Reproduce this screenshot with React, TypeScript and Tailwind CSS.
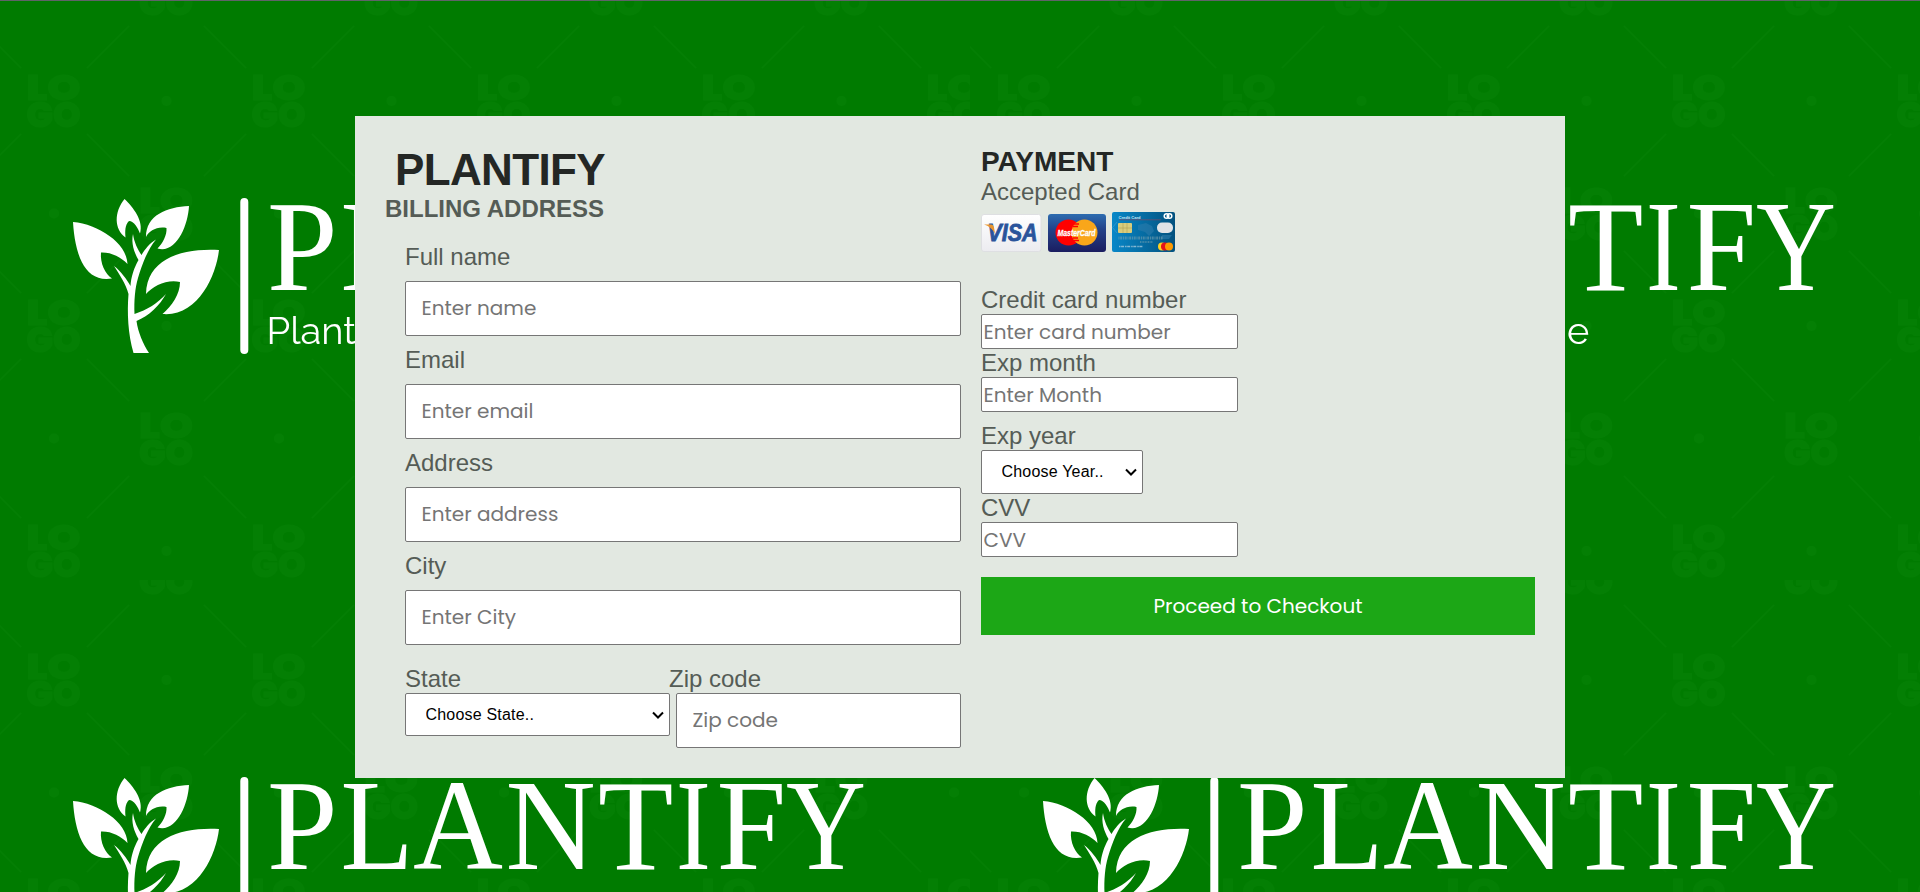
import React from 'react';

type FieldProps = { label: string; placeholder: string };

const sans = "font-['Liberation_Sans',Arial,sans-serif]";

const boxed =
  "box-border rounded-[2px] border border-[#767676] bg-white font-['Poppins','Inter',sans-serif] text-[20px] text-black placeholder:text-[#757575] outline-none";

function WideField({ label, placeholder }: FieldProps) {
  return (
    <label className="flex flex-col">
      <span className="leading-[27px]">{label}</span>
      <input placeholder={placeholder} className={`mt-[11px] h-[55px] w-full px-[15.5px] pb-[2px] ${boxed}`} />
    </label>
  );
}

function SmallField({ label, placeholder }: FieldProps) {
  return (
    <label className="flex flex-col">
      <span className="leading-[28px]">{label}</span>
      <input placeholder={placeholder} className={`h-[35px] w-[257px] px-[1.5px] ${boxed}`} />
    </label>
  );
}

function Picker({ option, size }: { option: string; size: string }) {
  return (
    <span className={`grid ${size}`}>
      <select className="col-start-1 row-start-1 h-full w-full appearance-none rounded-[2px] border border-[#767676] bg-white pl-[19.5px] text-[16px] tracking-[0.2px] text-black">
        <option>{option}</option>
      </select>
      <svg
        className="pointer-events-none col-start-1 row-start-1 mr-[6px] h-2 w-3 self-center justify-self-end"
        viewBox="0 0 12 8"
        fill="none"
        stroke="#000"
        strokeWidth="2"
      >
        <path d="M1 1.500L6 6.500L11 1.500" />
      </svg>
    </span>
  );
}

const glyphs = [
  { c: 'P', x: 267, w: 70.6 },
  { c: 'L', x: 340.6, w: 73 },
  { c: 'A', x: 413, w: 90 },
  { c: 'N', x: 505.5, w: 90.3 },
  { c: 'T', x: 598, w: 75.3 },
  { c: 'I', x: 676, w: 34.8 },
  { c: 'F', x: 716.5, w: 69.7 },
  { c: 'Y', x: 786, w: 80 },
];

function Mark({ x, y }: { x: number; y: number }) {
  return (
    <g strokeWidth="1" fontFamily="Poppins, sans-serif" fontWeight="800" fontSize="35">
      <text x={x - 27.5} y={y - 1} textLength="54" lengthAdjust="spacingAndGlyphs">
        LO
      </text>
      <text x={x - 27.5} y={y + 26} textLength="54" lengthAdjust="spacingAndGlyphs">
        GO
      </text>
    </g>
  );
}

function Backdrop() {
  return (
    <svg className="absolute inset-0 h-full w-full" aria-hidden="true">
      <defs>
        <pattern id="watermark" width="225" height="225" patternUnits="userSpaceOnUse">
          <g stroke="#047f04" fill="#047f04">
            <Mark x={54} y={101} />
            <Mark x={166.5} y={213.5} />
            <Mark x={166.5} y={-11.5} />
            <path
              strokeWidth="1.500"
              d="M87 68l42 -42M87 134l42 42M21 68L-21 26M21 134l-42 42M204 26l42 42M204 176l42 -42"
            />
            <circle cx="166.500" cy="101" r="5" stroke="none" />
            <circle cx="54" cy="213.500" r="5" stroke="none" />
          </g>
        </pattern>
        <pattern id="tile" width="970" height="579" y="1" patternUnits="userSpaceOnUse">
          <rect width="970" height="579" fill="#007b00" />
          <g transform="translate(0 -1)">
            <rect y="1" width="970" height="579" fill="url(#watermark)" />
            <g fill="#fff">
              <path d="M73 222C98 224 127 243 127.500 264C121 257 111 252 101 252.500C100 263 105 274 112 278.500C85 283 75 255 73 222Z" />
              <path d="M124.500 199C133 207 144 221 140 233.500C138 228 134 221 129 221C125 225 125 231 125.500 237.500C114 229 114 212 124.500 199Z" />
              <path d="M189 206C188 226 176 254 157.500 248.500C163 243 167 235 166.500 228C157 226 149 231 146 237C146 215 167 207 189 206Z" />
              <path d="M219 250C216 277 197 317 162.500 314C172 306 180 294 180 282C167 279 153 286 146 294C147 258 183 248 219 250Z" />
              <path d="M133.500 353C128 334 127 313 128.500 294C126 284 119 274 114 266C121 271 127 280 130.500 286C131 277 134 268 138.500 260C134 252 131 243 133 234C134 242 138 250 141.500 255C145 249 150 243 156 239.500C148 249 142 264 138 278C135 288 134 301 134.500 314C147 310 158 303 166 294C160 305 149 316 136.500 321C138 332 143 344 149 353Z" />
              <rect x="240.300" y="198" width="8" height="156" rx="4" />
              <text y="290" fontFamily="Liberation Serif, serif" fontSize="129">
                {glyphs.map((g) => (
                  <tspan key={g.x} x={g.x} textLength={g.w} lengthAdjust="spacingAndGlyphs">
                    {g.c}
                  </tspan>
                ))}
              </text>
              <text x="266.500" y="344" fontFamily="Raleway, Lato, sans-serif" fontWeight="400" fontSize="38">
                Plant
              </text>
              <text x="597" y="344" fontFamily="Raleway, Lato, sans-serif" fontWeight="400" fontSize="38">
                e
              </text>
            </g>
          </g>
        </pattern>
      </defs>
      <rect width="100%" height="100%" fill="url(#tile)" />
      <rect width="100%" height="1" fill="#5f6368" />
    </svg>
  );
}

function Cards() {
  return (
    <svg className="block h-[42px] w-[200px]" viewBox="0 0 200 42" aria-label="Accepted cards">
      <defs>
        <linearGradient id="visa" x2="0" y2="1">
          <stop stopColor="#fff" />
          <stop offset="1" stopColor="#ececf0" />
        </linearGradient>
        <linearGradient id="mc" x2="0" y2="1">
          <stop stopColor="#2d6cb0" />
          <stop offset=".4" stopColor="#234289" />
          <stop offset="1" stopColor="#1b1d60" />
        </linearGradient>
        <linearGradient id="cc">
          <stop stopColor="#0887c8" />
          <stop offset="1" stopColor="#03517e" />
        </linearGradient>
      </defs>
      <rect x=".5" y="4.500" width="59.500" height="37" rx="2.500" fill="url(#visa)" stroke="#dedfe2" />
      <text x="6.500" y="31" fontFamily="Liberation Sans" fontWeight="700" fontStyle="italic" fontSize="23" fill="#2a549b" stroke="#2a549b" strokeWidth=".8" textLength="50" lengthAdjust="spacingAndGlyphs">
        VISA
      </text>
      <path d="M3 14.500h7q2.500 0 3 3l1 6q-4-7-11-9Z" fill="#e9952f" />
      <rect x="67" y="4" width="58" height="38" rx="3" fill="url(#mc)" />
      <circle cx="87.500" cy="22.500" r="13" fill="#f00" />
      <circle cx="103.500" cy="22.500" r="13" fill="#f9a61a" />
      <path d="M93 14h5M92 16.500h5M92 28h5M93 30.500h5" stroke="#f00" strokeWidth="1.300" />
      <text x="76.500" y="26" fontFamily="Liberation Sans" fontWeight="700" fontStyle="italic" fontSize="9.500" fill="#fff" stroke="#fff" strokeWidth=".3" textLength="38" lengthAdjust="spacingAndGlyphs">
        MasterCard
      </text>
      <rect x="131" y="2" width="63" height="40" rx="2" fill="url(#cc)" />
      <text x="137.500" y="9" fontFamily="Liberation Sans" fontWeight="700" fontSize="4" fill="#cfe6f2" textLength="22" lengthAdjust="spacingAndGlyphs">
        Credit Card
      </text>
      <path d="M138 9.800h42" stroke="#7a4a68" strokeWidth=".7" />
      <path d="M136 12l-4.500 5.500l4.500 5.500" stroke="#3fa0d0" strokeWidth=".6" fill="none" />
      <rect x="137" y="13" width="14" height="10" rx="1" fill="#d9cc7c" />
      <path d="M142 13v10M146 13v10M137 18h14" stroke="#ab9b4c" strokeWidth=".5" />
      <path d="M157 15l8-2 6 3 2 5-5 5-4-4-7-2Z" fill="#2b7bab" opacity=".6" />
      <path d="M181 25h10l-3 4h-8Z" fill="#2b7bab" opacity=".6" />
      <rect x="176" y="12.500" width="16" height="10.500" rx="5" fill="#e0e3e6" />
      <circle cx="185.500" cy="6" r="2.300" fill="none" stroke="#fff" strokeWidth="1.500" />
      <circle cx="188.500" cy="6" r="2.300" fill="none" stroke="#fff" strokeWidth="1.500" />
      <path d="M137.500 28h44" stroke="#7da4b0" strokeWidth="3" strokeDasharray="1 .7 2 .8" opacity=".55" />
      <path d="M159 32h13" stroke="#7da4b0" strokeWidth="2" strokeDasharray="1 .6" opacity=".5" />
      <path d="M138 36.500h24" stroke="#c9dce6" strokeWidth="1.700" strokeDasharray="1.500 .6 3 1" opacity=".65" />
      <circle cx="181" cy="36.500" r="4" fill="#ffd21f" />
      <circle cx="184" cy="36.500" r="4" fill="#e5121b" />
      <circle cx="188" cy="36.500" r="4" fill="#ff9a00" />
    </svg>
  );
}

export default function App() {
  return (
    <div className="relative h-[892px] w-full overflow-hidden bg-[#007b00]">
      <Backdrop />
      <main className={`relative mx-auto mt-[116px] flex h-[662px] w-[1210px] bg-[#e2e8e1] text-[24px] text-[#555c56] ${sans}`}>
        <section className="w-[606px] pl-[30px] pt-[29px]">
          <h1 className="pl-[10px] text-[44px] font-bold leading-[50px] tracking-[-0.65px] text-[#242725]">PLANTIFY</h1>
          <h2 className="text-[24px] font-bold leading-[27px]">BILLING ADDRESS</h2>
          <div className="flex flex-col gap-[10px] pl-5 pt-[21px]">
            <WideField label="Full name" placeholder="Enter name" />
            <WideField label="Email" placeholder="Enter email" />
            <WideField label="Address" placeholder="Enter address" />
            <WideField label="City" placeholder="Enter City" />
          </div>
          <div className="flex pl-5 pt-5">
            <label className="flex w-[264px] flex-col">
              <span className="leading-[28px]">State</span>
              <Picker option="Choose State.." size="h-[43px] w-[265px]" />
            </label>
            <label className="flex w-[292px] flex-col">
              <span className="leading-[28px]">Zip code</span>
              <input placeholder="Zip code" className={`ml-[7px] h-[55px] w-[285px] px-[15.5px] pb-[2px] ${boxed}`} />
            </label>
          </div>
        </section>
        <section className="w-[574px] pl-5 pt-[30px]">
          <h2 className="text-[28px] font-bold leading-[32px] text-[#242725]">PAYMENT</h2>
          <p className="leading-[28px]">Accepted Card</p>
          <div className="pt-[4px]">
            <Cards />
          </div>
          <div className="pt-[34px]">
            <SmallField label="Credit card number" placeholder="Enter card number" />
            <SmallField label="Exp month" placeholder="Enter Month" />
          </div>
          <label className="flex flex-col pt-[10px]">
            <span className="leading-[28px]">Exp year</span>
            <Picker option="Choose Year.." size="h-[44px] w-[162px]" />
          </label>
          <SmallField label="CVV" placeholder="CVV" />
          <button className="mt-5 h-[58px] w-[554px] bg-[#1ca716] font-['Poppins','Inter',sans-serif] text-[20px] text-white">
            Proceed to Checkout
          </button>
        </section>
      </main>
    </div>
  );
}
